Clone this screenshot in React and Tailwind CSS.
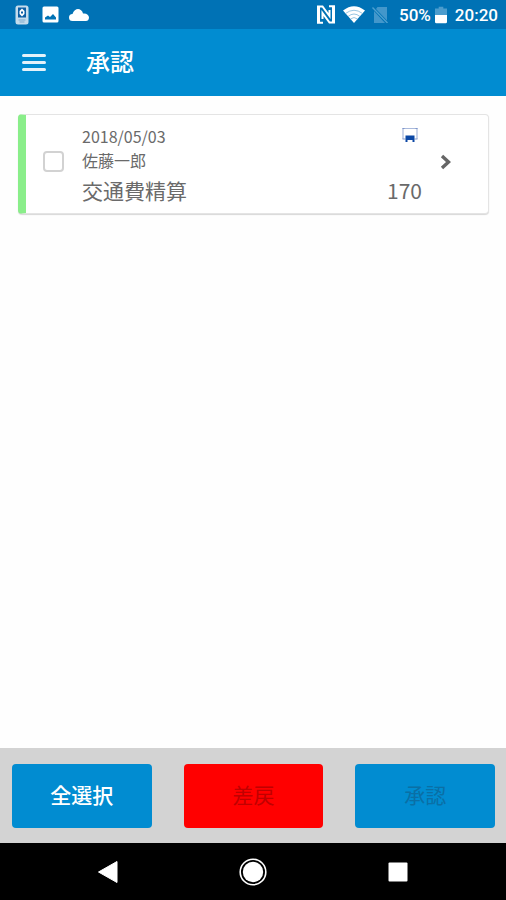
import React, { useState } from "react";

function StatusBar() {
  return (
    <div className="flex h-[29px] items-center justify-between bg-[#0072b5] pr-2 pl-[15px] text-white">
      <div className="flex items-center">
        <svg className="h-5 w-3.5" viewBox="0 0 14 20" aria-hidden="true">
          <rect x="0.5" y="0.5" width="13" height="19" rx="2.5" fill="#c5dcec" />
          <rect x="3" y="2.5" width="8" height="10" fill="#0b5fa5" />
          <path d="M7 3.500l2.500 2.500v3L7 11.500 4.500 9V6z" fill="#fff" />
          <rect x="6" y="6.500" width="2" height="2" fill="#0b5fa5" />
          <path d="M3.500 15h7M4.500 17h5" stroke="#7fabcd" />
        </svg>
        <svg className="ml-[13px] h-[17px] w-[17px]" viewBox="0 0 17 17" aria-hidden="true">
          <rect x="0.5" y="0.5" width="16" height="16" rx="1.5" fill="#fff" />
          <path d="M3 13.500V11.500l3-2 2 1.500 3-3 3 3.500v2z" fill="#0072b5" />
        </svg>
        <svg className="ml-2.5 h-3 w-5" viewBox="0 0 20 12" aria-hidden="true">
          <path d="M3.500 12a3.500 3.500 0 0 1 0-7C4.500 1.500 7 0 9 0s4.500 1.500 5 4.500c3.500-.5 6 1.500 6 4s-1.500 3.500-3 3.500z" fill="#fff" />
        </svg>
      </div>
      <div className="flex items-center font-[Roboto,sans-serif] text-[17px] leading-5 font-medium">
        <svg className="h-[19px] w-5" viewBox="0 0 20 19" aria-hidden="true">
          <path d="M7 17.800H2V1.500H6.500L13.500 11V5M13 1.200h5v16.300H13.500L6.500 8V14" fill="none" stroke="#fff" strokeWidth="2" />
          <path d="M2.500 1.500v16M17.500 1.500v16" stroke="#fff" strokeWidth="3" />
        </svg>
        <svg className="ml-[7px] h-[17px] w-[22px]" viewBox="0 0 22 17" aria-hidden="true">
          <path d="M0 4.500Q11-4 22 4.500L11 17z" fill="#fff" />
          <path d="M2.500 7.500Q11 1 19.500 7.500M5 10.500Q11 5.500 17 10.500M7.500 13Q11 10 14.500 13" fill="none" stroke="#7db7da" strokeWidth="0.8" />
        </svg>
        <svg className="ml-[7px] h-4 w-4" viewBox="0 0 16 16" aria-hidden="true">
          <path d="M5.500 0H15v13.500L4 2zM2 4L13 16H2z" fill="#4397cb" />
          <path d="M0.500 0.500L15.500 16" stroke="#4da0d0" strokeWidth="1.400" />
        </svg>
        <span className="ml-[11px]">50%</span>
        <svg className="ml-1 h-[18px] w-3" viewBox="0 0 13 18" aria-hidden="true">
          <path d="M4 0h5v2h4v7H0V2h4z" fill="#4b9ccd" />
          <path d="M0 9h13v7.500q0 1.500-1.500 1.500h-10Q0 18 0 16.500z" fill="#fff" />
        </svg>
        <span className="ml-2">20:20</span>
      </div>
    </div>
  );
}

function Header() {
  return (
    <header className="flex h-[67px] items-center bg-[#018cd1] pl-[22px] text-white">
      <button type="button" aria-label="メニュー" className="flex w-6 flex-col gap-1">
        <span className="h-[3px] rounded-full bg-[#e4f2fa]" />
        <span className="h-[3px] rounded-full bg-[#e4f2fa]" />
        <span className="h-[3px] rounded-full bg-[#e4f2fa]" />
      </button>
      <h1 className="ml-10 pb-1 text-2xl font-medium">承認</h1>
    </header>
  );
}

function TrainIcon() {
  return (
    <svg className="h-4 w-4" viewBox="0 0 16 16" role="img" aria-label="交通費">
      <path d="M1 12V1.500h14V12" fill="none" stroke="#a9b9dc" strokeWidth="1.200" />
      <path d="M0.500 1.500h2M13.500 1.500h2M0.500 12h3M12.500 12h3" stroke="#7f96ca" />
      <path d="M3.500 8.500h9V15h-2v-2h-5v2h-2z" fill="#0b47a5" />
    </svg>
  );
}

function ExpenseCard({ checked, onChange }) {
  return (
    <article className="flex h-[100px] overflow-hidden rounded border border-l-8 border-[#e4e4e4] border-l-[#8aee8a] bg-white text-[#6a6a6a] shadow-[0_1px_1px_#d8d8d8]">
      <input
        type="checkbox"
        aria-label="交通費精算を選択"
        checked={checked}
        onChange={onChange}
        className="mt-9 ml-[17px] h-[21px] w-[21px] shrink-0 appearance-none rounded border-2 border-[#d2d2d2] bg-white checked:bg-[#018cd1]"
      />
      <div className="ml-[18px] flex-1 pt-[9px]">
        <div className="flex h-6 justify-between pr-1">
          <time className="text-base leading-6" dateTime="2018-05-03">2018/05/03</time>
          <div className="pt-[3px]">
            <TrainIcon />
          </div>
        </div>
        <p className="text-base leading-6">佐藤一郎</p>
        <div className="flex justify-between text-[21px] leading-9">
          <span>交通費精算</span>
          <span>170</span>
        </div>
      </div>
      <button type="button" aria-label="詳細" className="mr-9 ml-[18px] h-[94px] shrink-0">
        <svg className="block h-4 w-3" viewBox="0 0 12 16" aria-hidden="true">
          <path d="M2 2l6.500 6L2 14" fill="none" stroke="#666" strokeWidth="3.400" />
        </svg>
      </button>
    </article>
  );
}

function ActionBar({ onSelectAll }) {
  const base = "h-16 flex-1 rounded pb-0.5 text-[21px] ";
  return (
    <footer className="flex h-[95px] items-center gap-8 bg-[#d3d3d3] pr-[11px] pl-3">
      <button type="button" onClick={onSelectAll} className={base + "bg-[#018cd1] font-medium text-white"}>全選択</button>
      <button type="button" disabled className={base + "bg-[#ff0000] text-[#c00000]"}>差戻</button>
      <button type="button" disabled className={base + "bg-[#018cd1] text-[#0a6fa5]"}>承認</button>
    </footer>
  );
}

function NavBar() {
  return (
    <nav className="flex h-[57px] items-center justify-center gap-[117px] bg-black">
      <button type="button" aria-label="戻る">
        <svg className="block h-7 w-7" viewBox="0 0 28 28" aria-hidden="true">
          <path d="M4.500 14L23 3.500v21z" fill="#fff" stroke="#fff" strokeLinejoin="round" />
        </svg>
      </button>
      <button type="button" aria-label="ホーム">
        <svg className="block h-7 w-7" viewBox="0 0 28 28" aria-hidden="true">
          <circle cx="14" cy="14" r="12.800" fill="none" stroke="#fff" strokeWidth="1.600" />
          <circle cx="14" cy="14" r="10.200" fill="#fff" />
        </svg>
      </button>
      <button type="button" aria-label="履歴">
        <svg className="block h-7 w-7" viewBox="0 0 28 28" aria-hidden="true">
          <rect x="4.500" y="4.500" width="19" height="19" rx="1" fill="#fff" />
        </svg>
      </button>
    </nav>
  );
}

export default function App() {
  const [checked, setChecked] = useState(false);
  return (
    <div className="flex min-h-screen flex-col bg-white font-['Noto_Sans_CJK_JP',sans-serif]">
      <StatusBar />
      <Header />
      <main className="flex-1 bg-[#fefefe] pt-[18px] pr-[17px] pl-[18px]">
        <ExpenseCard checked={checked} onChange={() => setChecked(!checked)} />
      </main>
      <ActionBar onSelectAll={() => setChecked(true)} />
      <NavBar />
    </div>
  );
}
